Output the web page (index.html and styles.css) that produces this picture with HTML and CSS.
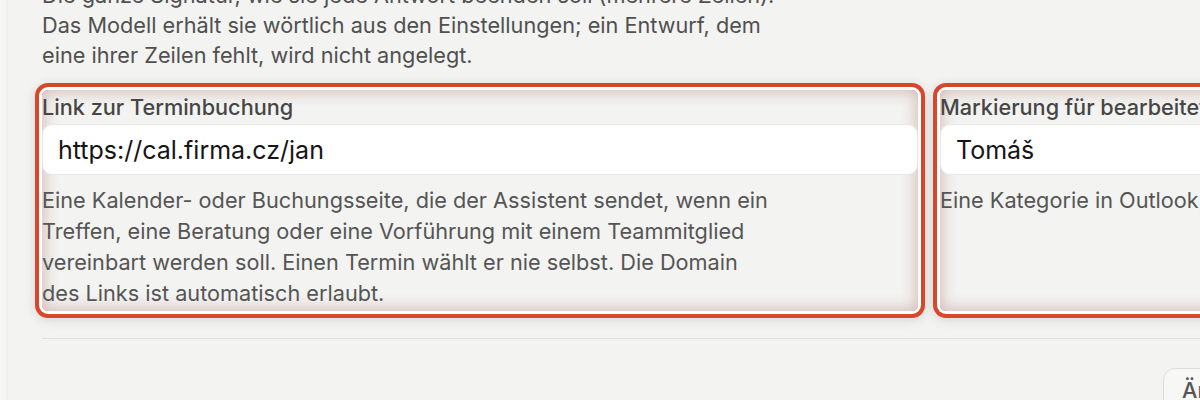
FILE: index.html
```html
<!DOCTYPE html>
<html lang="de">
<head>
<meta charset="utf-8">
<title>Einstellungen</title>
<link rel="stylesheet" href="styles.css">
</head>
<body>
<div class="rail"></div>
<main class="panel">
  <p class="intro">Die ganze Signatur, wie sie jede Antwort beenden soll (mehrere Zeilen). Das Modell erhält sie wörtlich aus den Einstellungen; ein Entwurf, dem eine ihrer Zeilen fehlt, wird nicht angelegt.</p>
  <div class="fields">
    <div class="field">
      <label class="label" for="booking">Link zur Terminbuchung</label>
      <input class="input" id="booking" type="text" value="https://cal.firma.cz/jan">
      <p class="help">Eine Kalender- oder Buchungsseite, die der Assistent sendet, wenn ein Treffen, eine Beratung oder eine Vorführung mit einem Teammitglied vereinbart werden soll. Einen Termin wählt er nie selbst. Die Domain des Links ist automatisch erlaubt.</p>
    </div>
    <div class="field">
      <label class="label" for="mark">Markierung für bearbeitete Nachrichten</label>
      <input class="input" id="mark" type="text" value="Tomáš">
      <p class="help">Eine Kategorie in Outlook, die bearbeitete Nachrichten kennzeichnet.</p>
    </div>
  </div>
  <hr class="divider">
  <div class="footer">
    <button class="btn" type="button">Änderungen speichern</button>
  </div>
</main>
</body>
</html>
```
FILE: styles.css
```css
html, body {
  margin: 0;
  padding: 0;
  height: 400px;
  overflow: hidden;
}
body {
  display: flex;
  background: #f6f6f5;
  font-family: Inter, "Noto Sans", sans-serif;
  color: #4a4a4a;
}
.rail {
  flex: 0 0 8px;
}
.panel {
  flex: 0 0 auto;
  width: 2000px;
  background: #f3f3f1;
  box-shadow: -1px 0 3px rgba(0, 0, 0, 0.06);
  padding: 0 0 0 34px;
  margin-top: -20px;
}
.intro {
  margin: 0;
  max-width: 750px;
  font-size: 21.7px;
  line-height: 30px;
  color: #505050;
}
.fields {
  display: grid;
  grid-template-columns: 876px 876px;
  column-gap: 22px;
  margin-top: 20px;
}
.field {
  display: flex;
  flex-direction: column;
  padding-bottom: 2px;
  border-radius: 6px;
  box-shadow:
    inset 0 0 14px 3px rgba(150, 80, 70, 0.3),
    0 0 0 3px #ffffff,
    0 0 0 7px #d8462b,
    0 2px 12px 7px rgba(0, 0, 0, 0.12);
}
.label {
  margin-top: 3px;
  font-size: 21.7px;
  line-height: 28px;
  font-weight: 500;
  color: #464646;
}
.input {
  margin-top: 3px;
  height: 51px;
  box-sizing: border-box;
  border: 1px solid #e7e7e5;
  border-radius: 10px;
  background: #ffffff;
  padding: 0 15px;
  font-family: Inter, "Noto Sans", sans-serif;
  font-size: 25px;
  color: #151515;
  outline: none;
}
.help {
  margin: 10px 0 0;
  max-width: 738px;
  font-size: 21.7px;
  line-height: 31px;
  color: #555555;
}
.divider {
  margin: 27px 0 0;
  border: 0;
  border-top: 1px solid #e3e3e1;
  height: 0;
}
.footer {
  display: flex;
  padding-left: 1121px;
  margin-top: 29px;
}
.btn {
  height: 44px;
  padding: 0 18px;
  border: 1px solid #dcdcda;
  border-radius: 12px;
  background: #f7f7f6;
  font-family: Inter, "Noto Sans", sans-serif;
  font-size: 21.7px;
  font-weight: 500;
  color: #555555;
}
```
